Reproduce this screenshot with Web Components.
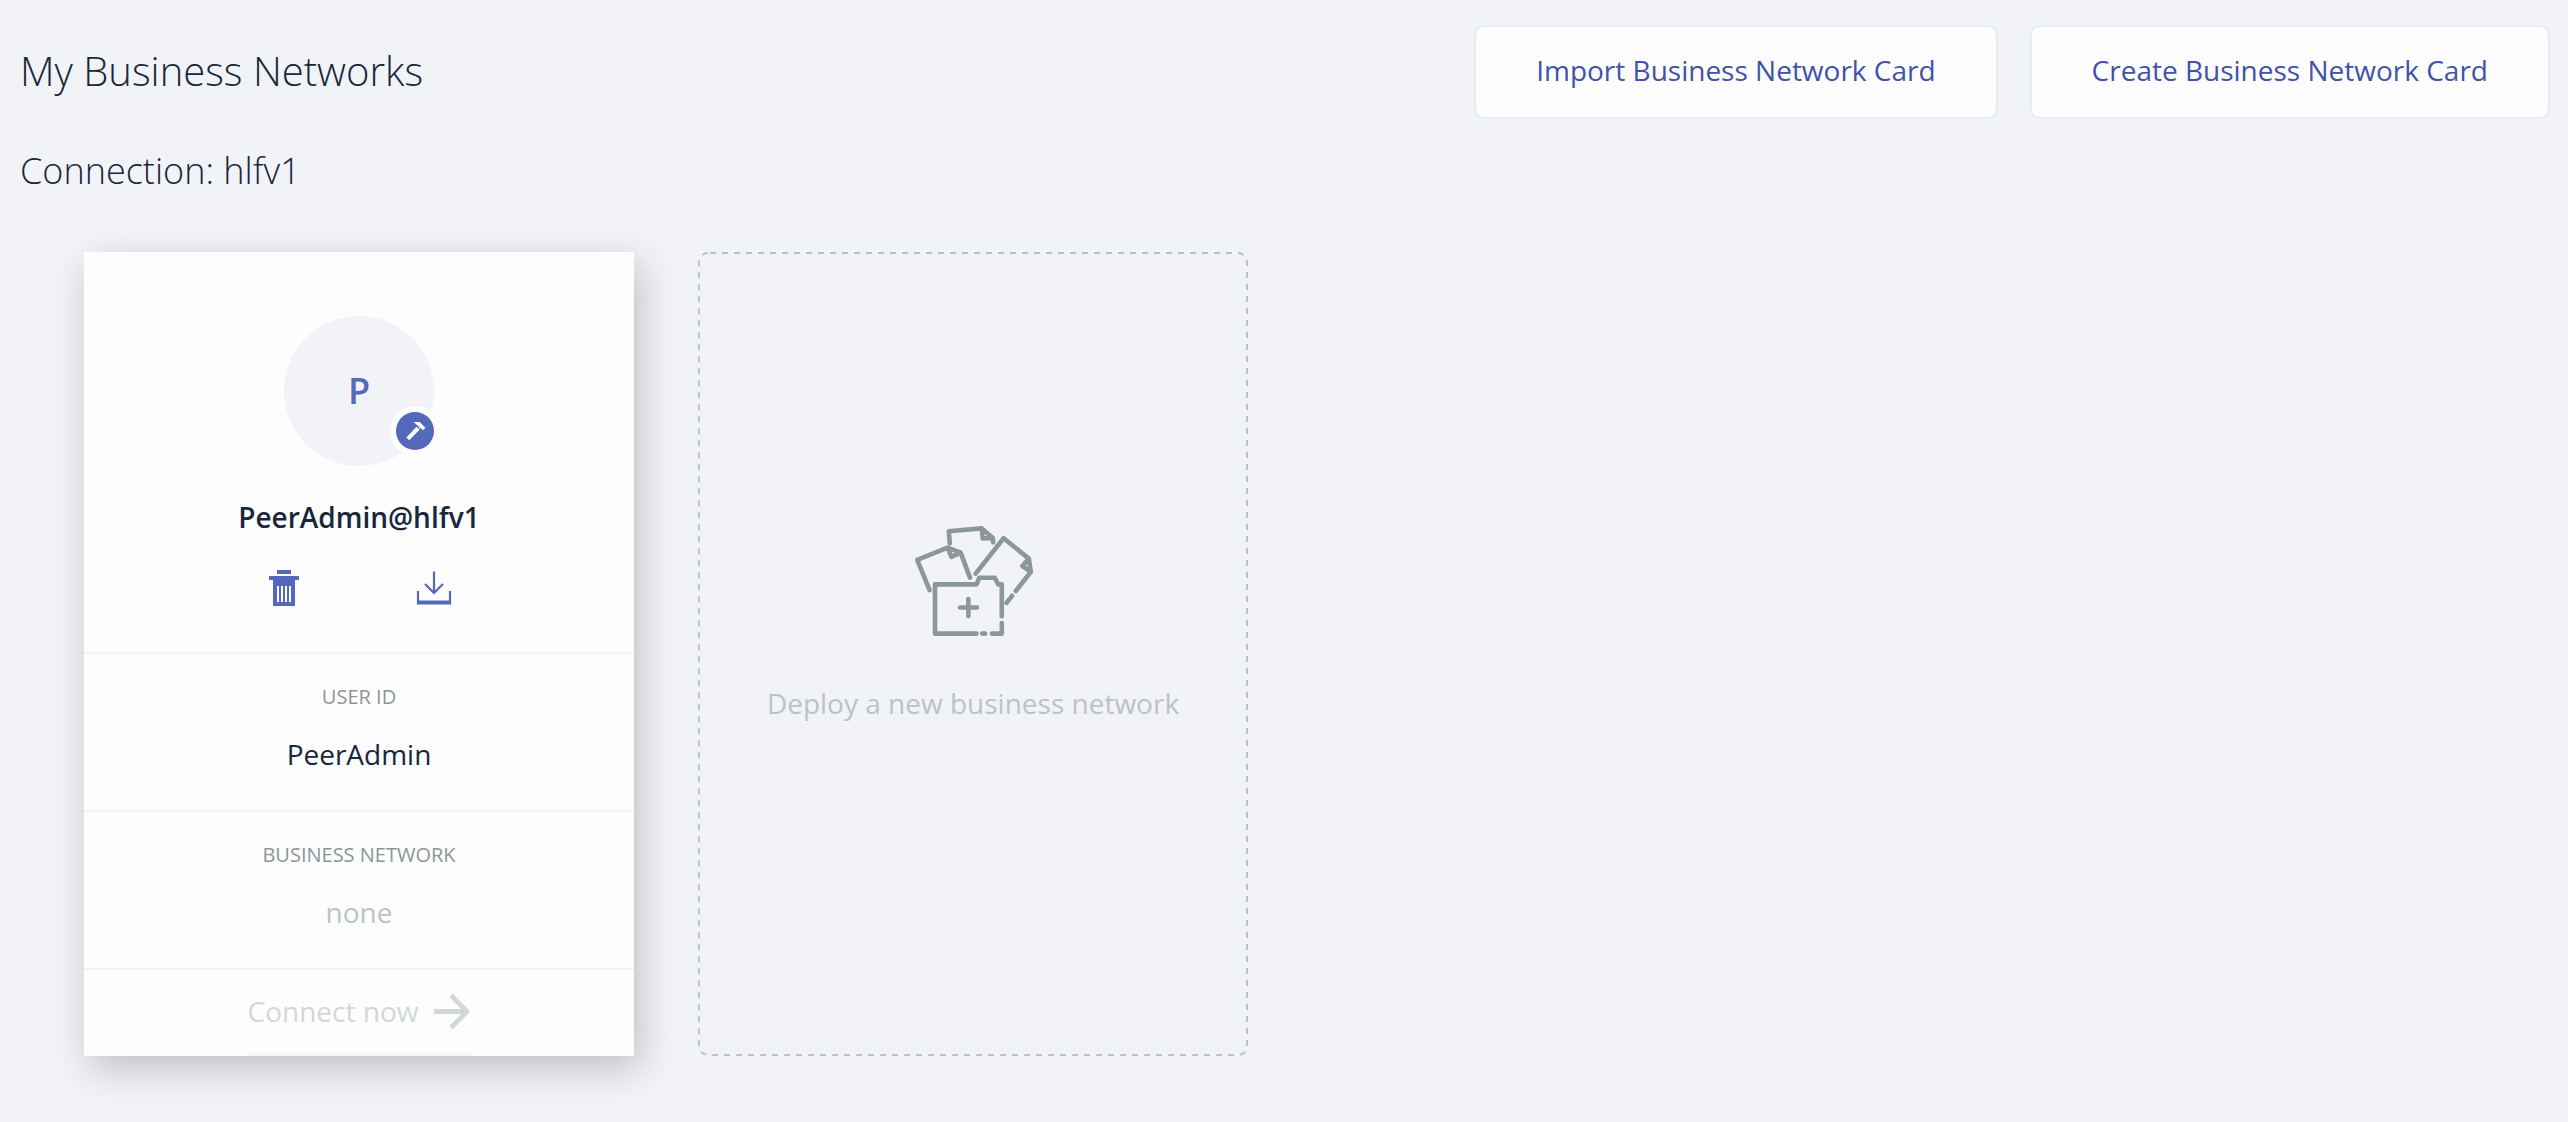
<!DOCTYPE html>
<html lang="en">
<head>
<meta charset="utf-8">
<title>My Business Networks</title>
<style>
  html { background: #f1f3f7; }
  body {
    margin: 0;
    font-family: "Open Sans", "Noto Sans", sans-serif;
    font-size: 28px;
    line-height: 38px;
    color: #19273c;
    --surface: #fdfdfe;
    --page: #f1f3f7;
    --accent: #5468bc;
    --link: #4153a8;
    --muted: #8c9696;
    --faint: #bac4c4;
  }
</style>
</head>
<body>
<network-page heading="My Business Networks">
  <action-button slot="actions">Import Business Network Card</action-button>
  <action-button slot="actions">Create Business Network Card</action-button>
  <connection-group name="Connection: hlfv1">
    <identity-card initial="P" name="PeerAdmin@hlfv1">
      <card-field label="USER ID">PeerAdmin</card-field>
      <card-field label="BUSINESS NETWORK" empty>none</card-field>
    </identity-card>
    <deploy-card>Deploy a new business network</deploy-card>
  </connection-group>
</network-page>

<script>
const base = `*{box-sizing:border-box;margin:0}button{font:inherit;color:inherit;background:none;border:0;padding:0;cursor:pointer}svg{display:block;overflow:visible}`;

function define(name, render) {
  customElements.define(name, class extends HTMLElement {
    connectedCallback() {
      if (this.shadowRoot) return;
      const t = document.createElement('template');
      t.innerHTML = render(this);
      this.attachShadow({ mode: 'open' }).append(t.content.cloneNode(true));
    }
  });
}

define('network-page', el => `
<style>${base}
  :host { display: block; padding: 25px 18px 64px 20px; }
  header { display: flex; align-items: center; justify-content: space-between; }
  h1 { font-size: 40px; line-height: 54px; font-weight: 300; padding-bottom: 2px; }
  nav { display: flex; gap: 32px; }
</style>
<header><h1>${el.getAttribute('heading')}</h1><nav><slot name="actions"></slot></nav></header>
<main><slot></slot></main>`);

define('action-button', () => `
<style>${base}
  :host { display: block; }
  button { padding: 24px 60px 28px; background: var(--surface); color: var(--link);
    border: 2px solid #e4ecec; border-radius: 10px; white-space: nowrap; }
</style>
<button type="button"><slot></slot></button>`);

define('connection-group', el => `
<style>${base}
  :host { display: block; }
  h2 { font-size: 36px; line-height: 48px; font-weight: 300; margin-top: 28px; }
  .cards { display: flex; flex-wrap: wrap; gap: 64px; padding: 57px 64px 0; }
</style>
<h2>${el.getAttribute('name')}</h2>
<div class="cards"><slot></slot></div>`);

define('identity-card', el => `
<style>${base}
  :host { display: flex; flex-direction: column; width: 550px; background: var(--surface);
    box-shadow: 6px 12px 36px rgba(0,0,0,.21); text-align: center; }
  .top { display: flex; flex-direction: column; align-items: center; padding: 64px 32px 46px; }
  .avatar { position: relative; display: grid; place-items: center; width: 150px; height: 150px;
    border-radius: 50%; background: var(--page); color: var(--accent); font-size: 36px; line-height: 50px; font-weight: 600; }
  .badge { position: absolute; right: -6px; bottom: 10px; width: 50px; height: 50px; }
  h3 { font-size: 28px; line-height: 38px; font-weight: 600; margin: 32px 0 34px; }
  .tools { display: flex; gap: 118px; color: var(--accent); padding-left: 2px; }
  footer { display: flex; justify-content: center; border-top: 2px solid var(--page); padding-top: 22px; }
  .connect { display: grid; gap: 22px; }
  .connect button { display: flex; align-items: center; gap: 16px; padding: 0 2px; color: #d1d8d7; cursor: default; }
  .edge { height: 4px; border-radius: 4px 4px 0 0; background: #f5f6fb; }
</style>
<div class="top">
  <div class="avatar">${el.getAttribute('initial')}
    <svg class="badge" viewBox="0 0 50 50" aria-hidden="true">
      <circle cx="25" cy="25" r="25" fill="#fdfdfe"/><circle cx="25" cy="25" r="19" fill="#5468bc"/>
      <path fill="#fff" d="M23.500 15.900h6.200l5.700 5.800-2.400 2.600-2.300-2.200-1.500 1.100 .2-2.100zM26.500 20.800l3 3L19.200 34.300l-2.800-2.800z"/>
    </svg>
  </div>
  <h3>${el.getAttribute('name')}</h3>
  <div class="tools">
    <button type="button" aria-label="Delete"><svg width="30" height="36" viewBox="0 0 30 36" fill="currentColor"><path fill-rule="evenodd" d="M8 0h14v4H8zM0 6h30v4h-4v26H4V10H0zM8 16v16h2V16zM12 16v16h2V16zM16 16v16h2V16zM20 16v16h2V16z"/></svg></button>
    <button type="button" aria-label="Export"><svg width="34" height="36" viewBox="0 0 34 36" fill="none" stroke="currentColor" stroke-width="2.200"><path d="M17 1.500v21.500M8 14l9 9 9-9"/><path d="M1 21v13M33 21v13"/><path stroke-width="4" d="M0 32.500h34"/></svg></button>
  </div>
</div>
<slot></slot>
<footer><div class="connect">
  <button type="button" disabled>Connect now<svg width="36" height="36" viewBox="0 0 36 36" fill="none" stroke="currentColor" stroke-width="4.800"><path d="M0 18.500h32.500M17 2.200L33 18.500 17 34.800"/></svg></button>
  <div class="edge"></div>
</div></footer>`);

define('card-field', el => `
<style>${base}
  :host { display: block; border-top: 2px solid var(--page); padding: 29px 32px 37px; }
  h4 { font-size: 20px; line-height: 28px; font-weight: 400; color: var(--muted); margin-bottom: 24px; }
  :host([empty]) p { color: var(--faint); }
</style>
<h4>${el.getAttribute('label')}</h4><p><slot></slot></p>`);

define('deploy-card', () => `
<style>${base}
  :host { display: grid; width: 550px; }
  .frame, button { grid-area: 1 / 1; }
  .frame { width: 100%; height: 100%; }
  .frame rect { width: calc(100% - 2px); height: calc(100% - 2px); }
  button { display: flex; flex-direction: column; align-items: center; gap: 47px; padding-top: 274px; color: var(--faint); justify-content: flex-start; }
</style>
<svg class="frame" aria-hidden="true"><rect x="1" y="1" rx="9" fill="none" stroke="#bac4c4" stroke-width="2" stroke-dasharray="6 6" stroke-dashoffset="-2"/></svg>
<button type="button">
  <svg width="118" height="111" viewBox="-1 0 118 111" fill="none" stroke="#8c9896" stroke-width="4.600" stroke-linecap="round" stroke-linejoin="round" aria-hidden="true">
    <path d="M61.500 107.600H20V58.400h41.600l2.600-6.600h15.600l3.400 6.600h3.600v31.800M86.800 97v10.600h-9.800M67.200 107.600h3"/>
    <path d="M53.400 73v17M45 81.500h17"/>
    <path d="M14.600 64.200L2.200 33.800 32.600 21.600l13 5L55 51.600M32.600 21.600l3.800 9.200 9.200-4.200"/>
    <path d="M34.800 17.400L33.800 5.200l33-2.800 11 9.600 .4 4.400M66.800 2.400l.8 10 10.200-.4"/>
    <path d="M60.600 47.600L88.600 12.200l25.200 20.400 2 13.200-15 19.200M97 69.800l-5.400 7M113.800 32.600l-6.400 7.400 8.400 5.800"/>
  </svg>
  <span><slot></slot></span>
</button>`);
</script>
</body>
</html>
